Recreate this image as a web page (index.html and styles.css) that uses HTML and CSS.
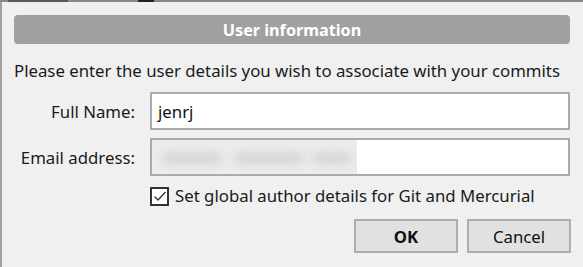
FILE: index.html
```html
<!DOCTYPE html>
<html>
<head>
<meta charset="utf-8">
<link rel="stylesheet" href="styles.css">
</head>
<body>
<div class="topstrip">
  <span class="frag f1"></span><span class="frag f2"></span><span class="frag f3"></span>
</div>
<div class="window">
  <div class="dialog">
    <div class="header">User information</div>
    <p class="intro">Please enter the user details you wish to associate with your commits</p>
    <div class="row">
      <label class="label">Full Name:</label>
      <div class="input"><span class="value">jenrj</span></div>
    </div>
    <div class="row">
      <label class="label">Email address:</label>
      <div class="input email">
        <div class="blur"><span class="blob b1"></span><span class="blob b2"></span><span class="blob b3"></span></div>
      </div>
    </div>
    <div class="checkrow">
      <span class="checkbox">
        <svg width="14" height="14" viewBox="0 0 14 14"><path d="M1.5 7.5 L5 11 L12.5 3" fill="none" stroke="#333" stroke-width="1.3"/></svg>
      </span>
      <span class="checklabel">Set global author details for Git and Mercurial</span>
    </div>
    <div class="buttons">
      <button class="btn ok">OK</button>
      <button class="btn">Cancel</button>
    </div>
  </div>
</div>
</body>
</html>
```
FILE: styles.css
```css
* { box-sizing: border-box; }
html, body { margin: 0; padding: 0; }
body {
  width: 583px;
  height: 267px;
  overflow: hidden;
  background: #f0f0f0;
  font-family: "Noto Sans", "Open Sans", sans-serif;
  font-size: 16.8px;
  color: #1a1a1a;
}
.topstrip {
  height: 2px;
  background: #888;
  display: flex;
  gap: 0;
  position: relative;
}
.frag { display: block; height: 2px; background: #3a3a3a; }
.f1 { width: 60px; margin-left: 8px; opacity: 0.6; }
.f2 { width: 16px; margin-left: 70px; background: #222; }
.f3 { width: 0; }
.window {
  border-left: 2px solid #a0a0a0;
  height: 265px;
}
.dialog {
  padding: 13px 12px 0 12px;
  display: flex;
  flex-direction: column;
}
.header {
  height: 29px;
  background: #a0a0a0;
  border-radius: 4px;
  color: #fff;
  font-weight: bold;
  font-size: 16.2px;
  display: flex;
  align-items: center;
  justify-content: center;
  margin-right: 1px;
}
.intro {
  margin: 17px 0 0 0;
  line-height: 20px;
  white-space: nowrap;
}
.row {
  display: flex;
  align-items: center;
  margin-top: 11px;
}
.row + .row { margin-top: 8px; }
.label {
  width: 121px;
  text-align: right;
  padding-right: 15px;
  flex: none;
  box-sizing: content-box;
  white-space: nowrap;
}
.input {
  width: 420px;
  height: 38px;
  border: 2px solid #ababab;
  background: #fff;
  display: flex;
  align-items: center;
  padding-left: 6px;
}
.value { color: #111; }
.input.email { padding: 0; align-items: stretch; }
.blur {
  width: 205px;
  background: #ececec;
  position: relative;
  overflow: hidden;
}
.blob {
  position: absolute;
  top: 13px;
  height: 10px;
  background: #d2d2d2;
  border-radius: 6px;
  filter: blur(5px);
}
.b1 { left: 10px; width: 60px; }
.b2 { left: 82px; width: 70px; }
.b3 { left: 160px; width: 40px; }
.checkrow {
  display: flex;
  align-items: center;
  margin-left: 136px;
  margin-top: 10px;
  gap: 6px;
  line-height: 20px;
}
.checkbox {
  width: 19px;
  height: 19px;
  border: 2px solid #333;
  background: #fff;
  display: flex;
  align-items: center;
  justify-content: center;
}
.buttons {
  display: flex;
  justify-content: flex-end;
  gap: 9px;
  margin-top: 13px;
  margin-right: 0;
}
.btn {
  width: 104px;
  height: 34px;
  background: #e1e1e1;
  border: 2px solid #adadad;
  font-family: inherit;
  font-size: 16.8px;
  color: #111;
  padding: 0;
}
.btn.ok { font-weight: bold; }
```
